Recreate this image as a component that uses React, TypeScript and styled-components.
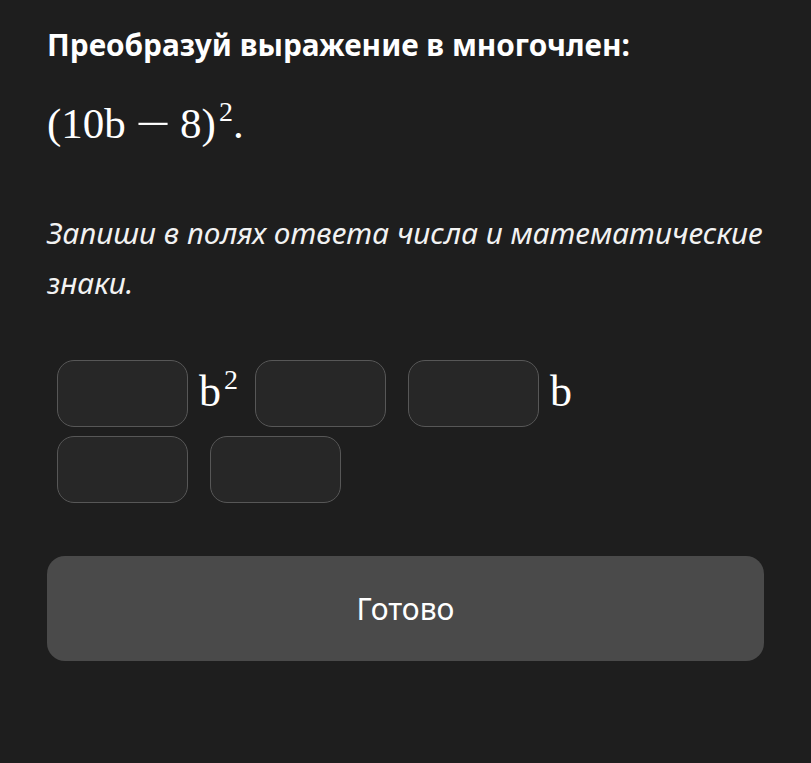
import styled, { createGlobalStyle } from "styled-components";

const Global = createGlobalStyle`
  html, body {
    margin: 0;
    padding: 0;
    background: #1e1e1e;
  }
`;

const Page = styled.div`
  width: 811px;
  height: 763px;
  box-sizing: border-box;
  padding: 23px 47px 0 47px;
  background: #1e1e1e;
  color: #ffffff;
  font-family: "Noto Sans", "Open Sans", sans-serif;
  display: flex;
  flex-direction: column;
`;

const Title = styled.h1`
  font-size: 29.8px;
  font-weight: 700;
  line-height: 44px;
  margin: 0;
`;

const Formula = styled.div`
  font-family: "Liberation Serif", "DejaVu Serif", serif;
  font-size: 43px;
  line-height: 52px;
  margin-top: 31px;
`;

const Minus = styled.span`
  display: inline-block;
  margin: 0 15px;
  transform: scaleX(1.45);
`;

const Sup = styled.sup`
  font-size: 28px;
  vertical-align: 17px;
  line-height: 0;
  margin-left: 3px;
`;

const Hint = styled.p`
  font-style: italic;
  font-size: 29.8px;
  line-height: 50px;
  margin: 58px 0 0 0;
  color: #f2f2f2;
`;

const Answer = styled.div`
  margin-top: 52px;
  margin-left: 10px;
  display: flex;
  flex-direction: column;
  gap: 9px;
`;

const Row = styled.div`
  display: flex;
  align-items: center;
`;

const Field = styled.input<{ $right?: number }>`
  width: 131px;
  height: 67px;
  box-sizing: border-box;
  border: 1.5px solid #575757;
  border-radius: 17px;
  background: #272727;
  color: #fff;
  font-size: 28px;
  text-align: center;
  outline: none;
  margin-right: ${(p) => p.$right ?? 0}px;
`;

const Term = styled.span<{ $w: number }>`
  font-family: "Liberation Serif", "DejaVu Serif", serif;
  font-size: 44px;
  width: ${(p) => p.$w}px;
  padding-left: 11px;
  box-sizing: border-box;
  margin-top: -4px;
`;

const Button = styled.button`
  margin-top: 53px;
  width: 717px;
  height: 105px;
  border: none;
  border-radius: 18px;
  background: #4a4a4a;
  color: #ffffff;
  font-family: "Noto Sans", "Open Sans", sans-serif;
  font-size: 30px;
`;

export default function App() {
  return (
    <Page>
      <Global />
      <Title>Преобразуй выражение в многочлен:</Title>
      <Formula>
        (10b<Minus>−</Minus>8)<Sup>2</Sup>.
      </Formula>
      <Hint>Запиши в полях ответа числа и математические знаки.</Hint>
      <Answer>
        <Row>
          <Field />
          <Term $w={67}>
            b<Sup>2</Sup>
          </Term>
          <Field $right={22} />
          <Field />
          <Term $w={40}>b</Term>
        </Row>
        <Row>
          <Field $right={22} />
          <Field />
        </Row>
      </Answer>
      <Button>Готово</Button>
    </Page>
  );
}
